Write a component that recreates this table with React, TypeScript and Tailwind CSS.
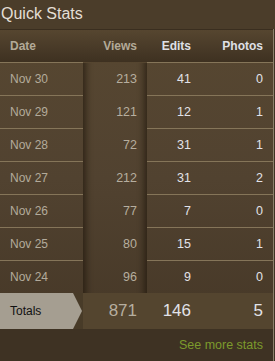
const ROWS = [
  { date: "Nov 30", views: 213, edits: 41, photos: 0 },
  { date: "Nov 29", views: 121, edits: 12, photos: 1 },
  { date: "Nov 28", views: 72, edits: 31, photos: 1 },
  { date: "Nov 27", views: 212, edits: 31, photos: 2 },
  { date: "Nov 26", views: 77, edits: 7, photos: 0 },
  { date: "Nov 25", views: 80, edits: 15, photos: 1 },
  { date: "Nov 24", views: 96, edits: 9, photos: 0 },
];

const TOTALS = { views: 871, edits: 146, photos: 5 };

function rowClass(i: number, lined: boolean) {
  const last = i === ROWS.length - 1;
  if (last) return "h-[32px]";
  return lined ? "h-[33px] border-b border-[#857559]" : "h-[33px]";
}

export default function App() {
  return (
    <div
      className="w-[275px] h-[361px] bg-[#3e3223] overflow-hidden"
      style={{ fontFamily: '"Liberation Sans", Arial, sans-serif' }}
    >
      <div className="h-[29px] bg-[#4b3d2a] pl-[1px] pt-[4px] text-[16px] leading-[20px] text-[#e4dfd5]">
        Quick Stats
      </div>

      <div className="w-[274px] border-r border-[#8b806c]">
        <div className="flex border-t border-[#3a2e1f] bg-gradient-to-b from-[#574731] via-[#514230] to-[#463827]">
          {/* Date */}
          <div className="w-[83px] flex flex-col">
            <div className="h-[33px] flex items-center pl-[10px] text-[12px] font-bold text-[#b3aa98] border-b border-[#857559] bg-gradient-to-b from-[#564630] to-[#3e3121]">
              Date
            </div>
            {ROWS.map((r, i) => (
              <div
                key={r.date}
                className={`flex items-center pl-[10px] text-[12px] text-[#b3ab9b] ${rowClass(i, true)}`}
              >
                {r.date}
              </div>
            ))}
            <div className="h-[36px] bg-[#483b28]">
              <div className="h-full w-[82px] bg-[#a59e91] flex items-center pl-[10px] text-[12px] text-[#111] [clip-path:polygon(0_0,73px_0,82px_50%,73px_100%,0_100%)]">
                Totals
              </div>
            </div>
          </div>

          {/* Views */}
          <div className="w-[64px] flex flex-col shadow-[inset_7px_0_6px_-4px_rgba(20,12,4,0.55),inset_-7px_0_6px_-4px_rgba(20,12,4,0.55)]">
            <div className="h-[33px] flex items-center justify-end pr-[10px] text-[12px] font-bold text-[#b3aa98] bg-gradient-to-b from-[#564630] to-[#3e3121] border-b border-transparent">
              Views
            </div>
            {ROWS.map((r, i) => (
              <div
                key={r.date}
                className={`flex items-center justify-end pr-[10px] text-[12.5px] text-[#b6ae9f] ${rowClass(i, false)}`}
              >
                {r.views}
              </div>
            ))}
            <div className="h-[36px] bg-[#54452f] flex items-center justify-end pr-[10px] text-[17px] text-[#b6ae9f]">
              {TOTALS.views}
            </div>
          </div>

          {/* Edits */}
          <div className="w-[52px] flex flex-col">
            <div className="h-[33px] flex items-center justify-end pr-[8px] text-[12px] font-bold text-[#dfe0e6] border-b border-[#857559] bg-gradient-to-b from-[#564630] to-[#3e3121]">
              Edits
            </div>
            {ROWS.map((r, i) => (
              <div
                key={r.date}
                className={`flex items-center justify-end pr-[8px] text-[12.5px] text-[#e2e2e8] ${rowClass(i, true)}`}
              >
                {r.edits}
              </div>
            ))}
            <div className="h-[36px] bg-[#54452f] flex items-center justify-end pr-[8px] text-[17px] text-[#e2e2e8]">
              {TOTALS.edits}
            </div>
          </div>

          {/* Photos */}
          <div className="flex-1 flex flex-col">
            <div className="h-[33px] flex items-center justify-end pr-[10px] text-[12px] font-bold text-[#dfe0e6] border-b border-[#857559] bg-gradient-to-b from-[#564630] to-[#3e3121]">
              Photos
            </div>
            {ROWS.map((r, i) => (
              <div
                key={r.date}
                className={`flex items-center justify-end pr-[10px] text-[12.5px] text-[#e2e2e8] ${rowClass(i, true)}`}
              >
                {r.photos}
              </div>
            ))}
            <div className="h-[36px] bg-[#54452f] flex items-center justify-end pr-[10px] text-[17px] text-[#e2e2e8]">
              {TOTALS.photos}
            </div>
          </div>
        </div>

        <div className="h-[32px] flex items-center justify-end pr-[10px] text-[12.5px] text-[#7c9a2c]">
          See more stats
        </div>
      </div>
    </div>
  );
}
